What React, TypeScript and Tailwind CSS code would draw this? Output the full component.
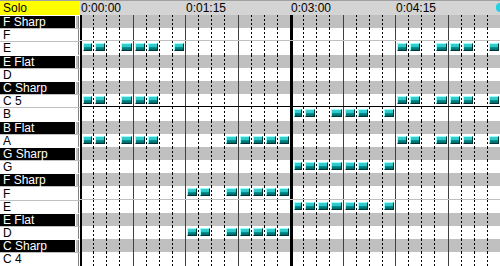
import React from "react";

type Row = { label: string; black?: boolean; notes?: number[]; bottom?: string };

const run = (a: number, b: number) => Array.from({ length: b - a + 1 }, (_, i) => a + i);

const rows: Row[] = [
  { label: "F Sharp", black: true },
  { label: "F", bottom: "border-b border-[#c0c0c0]" },
  { label: "E", notes: [0, 1, 3, 4, 5, 7, 24, 25, 27, 28, 29, 31] },
  { label: "E Flat", black: true },
  { label: "D" },
  { label: "C Sharp", black: true },
  { label: "C 5", notes: [0, 1, 3, 4, 5, 24, 25, 27, 28, 29, 31], bottom: "border-b border-black" },
  { label: "B", notes: [16, 17, 19, 20, 21, 23] },
  { label: "B Flat", black: true },
  { label: "A", notes: [0, 1, 3, 4, 5, 11, 12, 13, 14, 15, 24, 25, 27, 28, 29, 31] },
  { label: "G Sharp", black: true },
  { label: "G", notes: [...run(16, 21), 23] },
  { label: "F Sharp", black: true },
  { label: "F", notes: [8, 9, ...run(11, 15)], bottom: "border-b border-[#c0c0c0]" },
  { label: "E", notes: [...run(16, 21), 23] },
  { label: "E Flat", black: true },
  { label: "D", notes: [8, 9, ...run(11, 15)] },
  { label: "C Sharp", black: true },
  { label: "C 4" },
];

const beats = Array.from({ length: 32 }, (_, i) => i);

function lineClass(i: number) {
  if (i === 0) return "w-[2px] bg-black";
  if (i === 16) return "w-[3px] bg-black";
  if (i % 4 === 0) return "w-px bg-[#404040]";
  return "w-px bg-[repeating-linear-gradient(to_bottom,#000_0px,#000_2px,transparent_2px,transparent_4px)]";
}

function Note() {
  return (
    <div className="h-[8px] w-full mx-[1px] mt-[2px] border border-t-[#9ff] border-l-[#9ff] border-b-[#033] border-r-[#033] bg-[linear-gradient(to_bottom,#3cc_0,#3cc_40%,#088_60%,#066_100%)]" />
  );
}

function GridRow({ row }: { row: Row }) {
  return (
    <div
      className={`grid grid-cols-[repeat(32,1fr)] h-[13.2px] ${row.black ? "bg-[#c0c0c0]" : "bg-white"} ${row.bottom ?? ""}`}
    >
      {beats.map((b) => (
        <div key={b} className="flex h-full">
          <div className={`h-full shrink-0 ${lineClass(b)}`} />
          <div className="flex-1 flex items-start">{row.notes?.includes(b) && <Note />}</div>
        </div>
      ))}
    </div>
  );
}

function Label({ row }: { row: Row }) {
  if (row.black) {
    return (
      <div className="flex h-[13.2px] pt-[1px] bg-white">
        <div className="w-[75px] bg-black text-white pl-[3px] flex items-center text-[12px] leading-none">
          {row.label}
        </div>
        <div className="w-px bg-white" />
        <div className="w-[2px] bg-[#c0c0c0]" />
        <div className="w-px bg-[#808080]" />
        <div className="w-px bg-white" />
      </div>
    );
  }
  return (
    <div className="flex h-[13.2px] border-t border-[#c0c0c0] bg-white">
      <div className="w-[78px] text-black pl-[3px] flex items-center text-[12px] leading-none">{row.label}</div>
      <div className="w-px bg-[#808080]" />
      <div className="w-px bg-white" />
    </div>
  );
}

export default function App() {
  const marks = ["0:00:00", "0:01:15", "0:03:00", "0:04:15"];
  return (
    <div className="w-[500px] h-[266px] overflow-hidden bg-white font-['Liberation_Sans',Arial,sans-serif] text-black">
      {/* header */}
      <div className="flex h-[15px] border-t border-[#a0a0a0] bg-[#d4d4d4]">
        <div className="w-[80px] bg-[#ffff00] pl-[3px] text-[12px] leading-[14px]">Solo</div>
        <div className="flex-1 grid grid-cols-4">
          {marks.map((m, i) => (
            <div key={m} className="flex justify-between pl-[1px] text-[12px] leading-[14px]">
              <span>{m}</span>
              {i === 3 && <span className="w-[4px] h-[9px] mt-[2px] rounded-l-full bg-[#22d3e6]" />}
            </div>
          ))}
        </div>
      </div>

      <div className="flex">
        <div className="w-[80px]">
          {rows.map((r, i) => (
            <Label key={i} row={r} />
          ))}
        </div>
        <div className="flex-1">
          {rows.map((r, i) => (
            <GridRow key={i} row={r} />
          ))}
        </div>
      </div>
    </div>
  );
}
